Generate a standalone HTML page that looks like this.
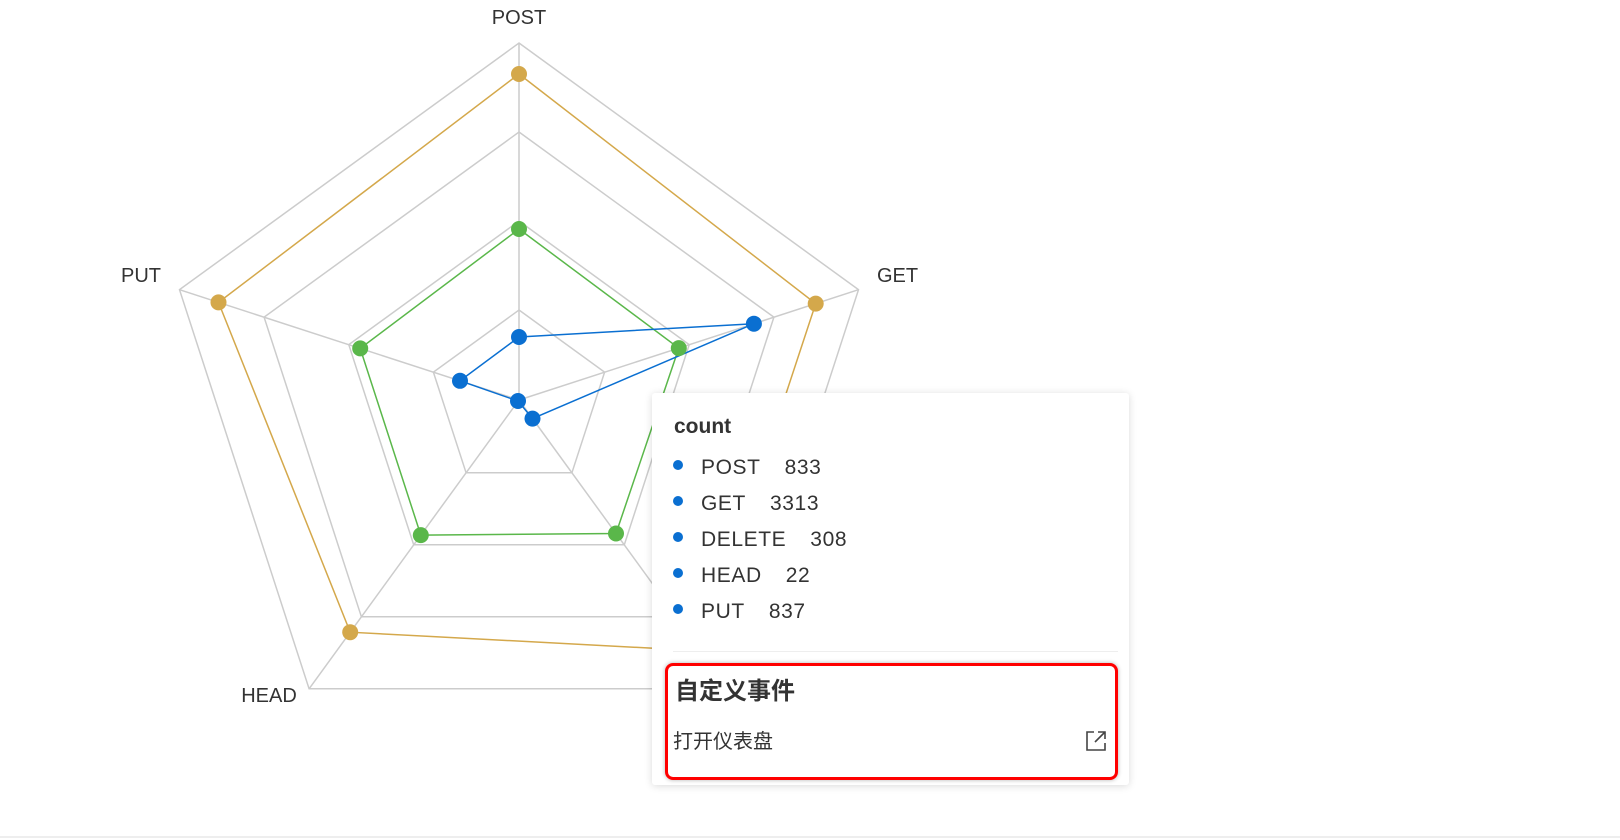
<!DOCTYPE html>
<html><head><meta charset="utf-8"><style>
body{margin:0;width:1620px;height:840px;background:#fff;overflow:hidden;position:relative;font-family:"Liberation Sans","Noto Sans CJK SC",sans-serif;color:#333}
svg{position:absolute;left:0;top:0}
.lbl{font-size:20px;fill:#333;font-family:"Liberation Sans",sans-serif}
.tip{position:absolute;left:652px;top:393px;width:477px;height:392px;background:#fff;box-shadow:0 1px 8px rgba(0,0,0,.15);border-radius:3px}
.t{position:absolute;white-space:nowrap}
.row{position:absolute;left:21px;font-size:21px;color:#333;height:36px;line-height:36px;letter-spacing:0.6px}
.row i{display:inline-block;width:10px;height:10px;border-radius:50%;background:#0a6fd1;margin-right:18px;vertical-align:middle;position:relative;top:-3px}
.row b{font-weight:normal;margin-left:24px}
</style></head><body>
<svg width="1620" height="840">
<g fill="none" stroke="#cccccc" stroke-width="1.5">
<polygon points="519,43 858.5,289.7 728.9,688.8 309.1,688.8 179.5,289.7"/>
<polygon points="519,132 773.9,317.2 676.6,616.8 361.4,616.8 264.1,317.2"/>
<polygon points="519,221 689.2,344.7 624.3,544.8 413.7,544.8 348.8,344.7"/>
<polygon points="519,310 604.6,372.2 571.9,472.8 466.1,472.8 433.4,372.2"/>
<line x1="519" y1="400" x2="519" y2="43"/><line x1="519" y1="400" x2="858.5" y2="289.7"/><line x1="519" y1="400" x2="728.9" y2="688.8"/><line x1="519" y1="400" x2="309.1" y2="688.8"/><line x1="519" y1="400" x2="179.5" y2="289.7"/>
</g>
<g fill="none" stroke-width="1.5">
<polygon stroke="#d4a84b" points="519,74 815.7,303.6 701.3,650.8 350.2,632.2 218.5,302.4"/>
<polygon stroke="#5ab74a" points="519,229 678.8,348.1 616,533.5 420.8,535.1 360.2,348.4"/>
<polygon stroke="#0a6fd1" points="519,337 753.9,323.7 532.5,418.6 518,401 460,380.8"/>
</g>
<g fill="#d4a84b"><circle cx="519" cy="74" r="8"/><circle cx="815.7" cy="303.6" r="8"/><circle cx="701.3" cy="650.8" r="8"/><circle cx="350.2" cy="632.2" r="8"/><circle cx="218.5" cy="302.4" r="8"/></g>
<g fill="#5ab74a"><circle cx="519" cy="229" r="8"/><circle cx="678.8" cy="348.1" r="8"/><circle cx="616" cy="533.5" r="8"/><circle cx="420.8" cy="535.1" r="8"/><circle cx="360.2" cy="348.4" r="8"/></g>
<g fill="#0a6fd1"><circle cx="519" cy="337" r="8"/><circle cx="753.9" cy="323.7" r="8"/><circle cx="532.5" cy="418.6" r="8"/><circle cx="518" cy="401" r="8"/><circle cx="460" cy="380.8" r="8"/></g>
<text class="lbl" x="519" y="24" text-anchor="middle">POST</text>
<text class="lbl" x="877" y="282">GET</text>
<text class="lbl" x="161" y="282" text-anchor="end">PUT</text>
<text class="lbl" x="269" y="702" text-anchor="middle">HEAD</text>
<line x1="0" y1="837" x2="1620" y2="837" stroke="#ddd" stroke-width="1"/>
</svg>
<div class="tip">
<div class="t" style="left:22px;top:22px;font-size:21px;font-weight:bold;color:#333">count</div>
<div class="row" style="top:57px"><i></i>POST<b>833</b></div>
<div class="row" style="top:93px"><i></i>GET<b>3313</b></div>
<div class="row" style="top:129px"><i></i>DELETE<b>308</b></div>
<div class="row" style="top:165px"><i></i>HEAD<b>22</b></div>
<div class="row" style="top:201px"><i></i>PUT<b>837</b></div>
<div style="position:absolute;left:21px;right:11px;top:258px;height:1px;background:#eee"></div>
<div class="t" style="left:23px;top:283px;font-size:24px;font-weight:bold;color:#333;line-height:32px">自定义事件</div>
<div class="t" style="left:21px;top:335px;font-size:20px;color:#333;line-height:28px">打开仪表盘</div>
<svg style="left:433px;top:337px" width="22" height="22" viewBox="0 0 22 22" fill="none" stroke="#444" stroke-width="1.6"><path d="M9 2H2V20H20V13"/><path d="M13 2H20V9"/><path d="M20 2L10 12"/></svg>
</div>
<div style="position:absolute;left:665px;top:663px;width:447px;height:111px;border:3px solid #f00;border-radius:8px;box-shadow:0 0 4px rgba(0,0,0,.3)"></div>
</body></html>
